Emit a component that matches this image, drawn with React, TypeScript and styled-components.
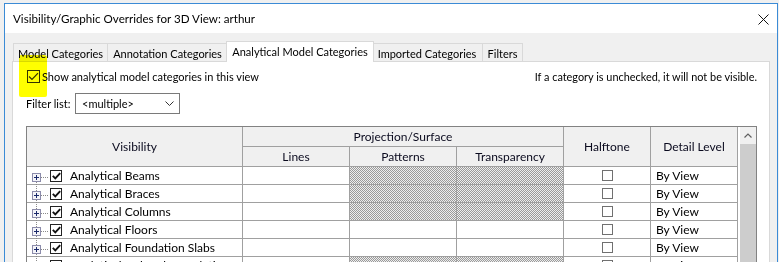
import React from 'react';
import styled, { createGlobalStyle, css } from 'styled-components';

const Global = createGlobalStyle`
  html, body { margin: 0; padding: 0; background: #f0f0f0; overflow: hidden; }
  body { font-family: Lato, "Noto Sans", sans-serif; font-size: 11px; color: #000; }
  * { box-sizing: border-box; }
`;

const Screen = styled.div`
  position: relative;
  width: 779px;
  height: 262px;
  overflow: hidden;
  padding: 3px 0 0 4px;
`;

const Window = styled.div`
  width: 774px;
  height: 320px;
  border: 1px solid #3b8bd6;
  background: #f0f0f0;
  display: flex;
  flex-direction: column;
`;

const TitleBar = styled.div`
  height: 29px;
  background: #fff;
  display: flex;
  align-items: center;
  justify-content: space-between;
  padding: 1px 8px 0 8px;
`;

const Title = styled.span`
  font-size: 11.6px;
  line-height: 16px;
`;

const Body = styled.div`
  flex: 1;
  display: flex;
  flex-direction: column;
  padding: 8px 7px 0 7px;
`;

const TabRow = styled.div`
  display: flex;
  align-items: flex-end;
  height: 20px;
  padding-left: 1px;
`;

const Tab = styled.div<{ $w: number; $active?: boolean; $first?: boolean }>`
  position: relative;
  width: ${(p) => p.$w}px;
  height: 18px;
  display: flex;
  justify-content: center;
  align-items: center;
  padding-top: 1px;
  background: #f0f0f0;
  border-top: 1px solid #d9d9d9;
  border-right: 1px solid #d9d9d9;
  border-left: ${(p) => (p.$first ? '1px solid #d9d9d9' : 'none')};
  white-space: nowrap;
  ${(p) =>
    p.$active &&
    css`
      z-index: 2;
      height: 21px;
      margin: 0 -2px -1px -2px;
      background: #fff;
      border-left: 1px solid #d9d9d9;
      padding-top: 0;
      padding-bottom: 1px;
    `}
`;

const Panel = styled.div`
  flex: 1;
  background: #fff;
  border: 1px solid #d9d9d9;
  padding: 8px 12px 0 13px;
  display: flex;
  flex-direction: column;
`;

const TopRow = styled.div`
  display: flex;
  align-items: center;
  justify-content: space-between;
  height: 13px;
  white-space: nowrap;
`;

const CheckLabel = styled.label`
  display: flex;
  align-items: center;
  gap: 2px;
  margin-left: 1px;
`;

const Hint = styled.span`
  font-size: 10.9px;
`;

const BigCheck = styled.span`
  width: 13px;
  height: 13px;
  border: 1px solid #333;
  display: flex;
  align-items: center;
  justify-content: center;
`;

const FilterRow = styled.div`
  display: flex;
  align-items: center;
  margin-top: 10px;
  gap: 4px;
  white-space: nowrap;
`;

const FilterLabel = styled.span`
  width: 45px;
`;

const Dropdown = styled.div`
  width: 105px;
  height: 21px;
  border: 1px solid #7a7a7a;
  background: #fff;
  display: flex;
  align-items: center;
  justify-content: space-between;
  padding: 0 5px 0 6px;
`;

const TableFrame = styled.div`
  margin-top: 12px;
  width: 731px;
  border: 1px solid #828282;
  border-bottom: none;
  display: flex;
  align-items: flex-start;
  font-size: 12px;
`;

const Grid = styled.div`
  display: grid;
  grid-template-columns: 216px 107px 107px 107px 87px 87px;
  grid-template-rows: 20px 20px repeat(6, 18px);
  width: 711px;
`;

const HeadCell = styled.div<{ $col: string; $row: string }>`
  grid-column: ${(p) => p.$col};
  grid-row: ${(p) => p.$row};
  background: #f0f0f0;
  border-right: 1px solid #a0a0a0;
  border-bottom: 1px solid #a0a0a0;
  display: flex;
  align-items: center;
  justify-content: center;
  padding-bottom: 1px;
  color: #0a0a1e;
`;

const Cell = styled.div<{ $hatch?: boolean }>`
  border-right: 1px solid #a0a0a0;
  border-bottom: 1px solid #a0a0a0;
  background: #fff;
  display: flex;
  align-items: center;
  ${(p) =>
    p.$hatch &&
    css`
      background-image: repeating-conic-gradient(#9a9a9a 0 25%, #eeeeee 0 50%);
      background-size: 2px 2px;
    `}
`;

const VisCell = styled(Cell)`
  white-space: nowrap;
  overflow: visible;
`;

const Gutter = styled.svg`
  flex: none;
  display: block;
`;

const SmallCheck = styled.span`
  flex: none;
  width: 12px;
  height: 12px;
  border: 1px solid #222;
  background: #fff;
  display: flex;
  align-items: center;
  justify-content: center;
`;

const RowLabel = styled.span`
  margin-left: 8px;
`;

const CenterCell = styled(Cell)`
  justify-content: center;
`;

const EmptyBox = styled.span`
  width: 11px;
  height: 11px;
  border: 1px solid #707070;
  background: #fff;
  margin-left: 1px;
`;

const DetailCell = styled(Cell)`
  padding-left: 5px;
`;

const ScrollCol = styled.div`
  width: 18px;
  padding-left: 2px;
  align-self: stretch;
  display: flex;
  flex-direction: column;
`;

const ScrollUp = styled.div`
  height: 17px;
  background: #f0f0f0;
  display: flex;
  align-items: center;
  justify-content: center;
`;

const Thumb = styled.div`
  flex: 1;
  background: #cdcdcd;
`;

const Highlight = styled.div`
  position: absolute;
  left: 19px;
  top: 55px;
  width: 28px;
  height: 42px;
  background: #ffff00;
  mix-blend-mode: multiply;
  border-radius: 2px 3px 2px 2px;
  z-index: 10;
`;

const rows = [
  { name: 'Analytical Beams', hatch: true },
  { name: 'Analytical Braces', hatch: true },
  { name: 'Analytical Columns', hatch: true },
  { name: 'Analytical Floors', hatch: false },
  { name: 'Analytical Foundation Slabs', hatch: false },
  { name: 'Analytical Isolated Foundations', hatch: true },
];

const CheckMark = () => (
  <svg width="9" height="8" viewBox="0 0 9 8">
    <path d="M0.8 3.8 L3.3 6.3 L8.2 1.2" fill="none" stroke="#111" strokeWidth="1.9" />
  </svg>
);

const ThinCheck = () => (
  <svg width="11" height="9" viewBox="0 0 11 9">
    <path d="M1 4.5 L4 7.5 L10 1.2" fill="none" stroke="#333" strokeWidth="1.2" />
  </svg>
);

const TreeGlyph = ({ first }: { first: boolean }) => (
  <Gutter width="23" height="17" viewBox="0 0 23 17" overflow="visible">
    {!first && <line x1="9.5" y1="-1" x2="9.5" y2="6" stroke="#8a8a8a" strokeDasharray="1 1" />}
    <line x1="9.5" y1="15" x2="9.5" y2="18" stroke="#8a8a8a" strokeDasharray="1 1" />
    <line x1="14" y1="10.5" x2="22" y2="10.5" stroke="#8a8a8a" strokeDasharray="1 1" />
    <rect x="5.5" y="6.5" width="8" height="8" fill="#f4f4f8" stroke="#8c8cab" />
    <line x1="7" y1="10.5" x2="12" y2="10.5" stroke="#1b2a6b" />
    <line x1="9.5" y1="8" x2="9.5" y2="13" stroke="#1b2a6b" />
  </Gutter>
);

export default function App() {
  return (
    <Screen>
      <Global />
      <Window>
        <TitleBar>
          <Title>Visibility/Graphic Overrides for 3D View: arthur</Title>
          <svg width="11" height="11" viewBox="0 0 11 11">
            <path d="M0.5 0.5 L10.5 10.5 M10.5 0.5 L0.5 10.5" stroke="#111" strokeWidth="1" />
          </svg>
        </TitleBar>
        <Body>
          <TabRow>
            <Tab $w={95} $first>Model Categories</Tab>
            <Tab $w={120}>Annotation Categories</Tab>
            <Tab $w={148} $active>Analytical Model Categories</Tab>
            <Tab $w={111}>Imported Categories</Tab>
            <Tab $w={40}>Filters</Tab>
          </TabRow>
          <Panel>
            <TopRow>
              <CheckLabel>
                <BigCheck>
                  <ThinCheck />
                </BigCheck>
                <span>Show analytical model categories in this view</span>
              </CheckLabel>
              <Hint>If a category is unchecked, it will not be visible.</Hint>
            </TopRow>
            <FilterRow>
              <FilterLabel>Filter list:</FilterLabel>
              <Dropdown>
                <span>&lt;multiple&gt;</span>
                <svg width="9" height="6" viewBox="0 0 9 6">
                  <path d="M0.5 0.5 L4.5 4.5 L8.5 0.5" fill="none" stroke="#333" />
                </svg>
              </Dropdown>
            </FilterRow>
            <TableFrame>
              <Grid>
                <HeadCell $col="1" $row="1 / 3">Visibility</HeadCell>
                <HeadCell $col="2 / 5" $row="1">Projection/Surface</HeadCell>
                <HeadCell $col="2" $row="2">Lines</HeadCell>
                <HeadCell $col="3" $row="2">Patterns</HeadCell>
                <HeadCell $col="4" $row="2">Transparency</HeadCell>
                <HeadCell $col="5" $row="1 / 3">Halftone</HeadCell>
                <HeadCell $col="6" $row="1 / 3">Detail Level</HeadCell>
                {rows.map((r, i) => (
                  <React.Fragment key={r.name}>
                    <VisCell>
                      <TreeGlyph first={i === 0} />
                      <SmallCheck>
                        <CheckMark />
                      </SmallCheck>
                      <RowLabel>{r.name}</RowLabel>
                    </VisCell>
                    <Cell />
                    <Cell $hatch={r.hatch} />
                    <Cell $hatch={r.hatch} />
                    <CenterCell>
                      <EmptyBox />
                    </CenterCell>
                    <DetailCell>By View</DetailCell>
                  </React.Fragment>
                ))}
              </Grid>
              <ScrollCol>
                <ScrollUp>
                  <svg width="8" height="5" viewBox="0 0 8 5">
                    <path d="M0.5 4.5 L4 1 L7.5 4.5" fill="none" stroke="#606060" strokeWidth="1.2" />
                  </svg>
                </ScrollUp>
                <Thumb />
              </ScrollCol>
            </TableFrame>
          </Panel>
        </Body>
      </Window>
      <Highlight />
    </Screen>
  );
}
